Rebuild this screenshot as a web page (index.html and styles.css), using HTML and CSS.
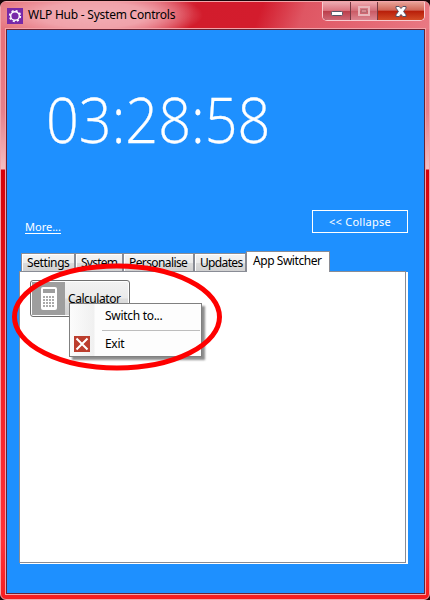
FILE: index.html
```
<!DOCTYPE html>
<html lang="en">
<head>
<meta charset="utf-8">
<title>WLP Hub - System Controls</title>
<link rel="stylesheet" href="styles.css">
</head>
<body>
<div class="window">
  <header class="titlebar">
    <svg class="app-icon" width="16" height="16" viewBox="0 0 16 16"><rect width="16" height="16" fill="#7729a8"/><circle cx="8" cy="8" r="5.4" fill="none" stroke="#fff" stroke-width="1.5" stroke-dasharray="2.1 2.14"/><circle cx="8" cy="8" r="4.3" fill="none" stroke="#fff" stroke-width="1.4"/></svg>
    <h1 class="title">WLP Hub - System Controls</h1>
    <div class="controls">
      <span class="control minimise"><svg width="14" height="7"><rect x="1.5" y="1.5" width="11" height="4" rx="1" fill="#fff" stroke="#555566"/></svg></span>
      <span class="control maximise"><svg width="12" height="10"><rect x="1" y="1" width="10" height="8" fill="none" stroke="#e9b6bb" stroke-width="2"/><rect x="3.5" y="3.5" width="5" height="3" fill="#d78790" stroke="#b66b73"/></svg></span>
      <span class="control close"><svg width="12" height="11" viewBox="0 0 12 11"><path d="M1 .5H4.2L6 2.500 7.800 .5H11V2.200L8.600 5.500 11 8.800V10.500H7.800L6 8.500 4.200 10.500H1V8.800L3.400 5.500 1 2.200Z" fill="#fff" stroke="#535164"/></svg></span>
    </div>
  </header>
  <main class="client">
    <div class="clock">03:28:58</div>
    <div class="actions"><a class="more">More...</a><button class="collapse">&lt;&lt; Collapse</button></div>
    <nav class="tabs">
      <span class="tab settings">Settings</span><span class="tab system">System</span><span class="tab personalise">Personalise</span><span class="tab updates">Updates</span><span class="tab active">App Switcher</span>
    </nav>
    <section class="panel">
      <button class="app-button">
        <svg width="33" height="33" viewBox="0 0 33 33"><rect width="33" height="33" fill="#9e9e9e"/><rect x="9" y="5" width="16" height="23" rx="2" fill="#fff"/><rect x="11" y="7" width="12" height="4" fill="#9e9e9e"/><path d="M11 14h2v2h-2zM14 14h2v2h-2zM17 14h2v2h-2zM20 14h2v2h-2zM11 17h2v2h-2zM14 17h2v2h-2zM17 17h2v2h-2zM20 17h2v2h-2zM11 20h2v2h-2zM14 20h2v2h-2zM17 20h2v2h-2zM20 20h2v2h-2zM11 23h2v2h-2zM14 23h2v2h-2zM17 23h2v2h-2zM20 23h2v2h-2z" fill="#aaa"/></svg>
        <span class="app-name">Calculator</span>
      </button>
    </section>
  </main>
</div>
<div class="menu">
  <div class="menu-item switch"><span>Switch to...</span></div>
  <div class="separator"></div>
  <div class="menu-item exit"><svg width="16" height="16"><rect width="16" height="16" fill="#bc3e2e"/><path d="M2.500 2.500L13.500 13.500M13.500 2.500L2.500 13.500" stroke="#fff" stroke-width="2"/></svg><span>Exit</span></div>
</div>
<svg class="highlight" width="214" height="112"><ellipse cx="107" cy="56" rx="102.500" ry="51" fill="none" stroke="#fe0000" stroke-width="5"/></svg>
</body>
</html>
```
FILE: styles.css
```
* { box-sizing: border-box; }
body { margin: 0; width: 430px; height: 600px; overflow: hidden; background: #190609; font: 12px/16px "Noto Sans", sans-serif; color: #000; }
button { font: inherit; padding: 0; margin: 0; }
svg { display: block; flex: none; }
.window { width: 430px; height: 599px; margin-top: 1px; padding: 0 4px 4px 5px; border: 1px solid #f3a5aa; border-radius: 6px; background: linear-gradient(#e6717c 0, #e6717c 45px, #e7808b 110px, #f4bec2 167px, #d5000b 168px, #d90b12 220px, #f02028 370px, #ff3038 540px, #f51c1e 100%); }
.titlebar { height: 27px; margin: 0 -4px 0 -5px; padding: 0 4px 0 6px; display: flex; align-items: flex-start; border-radius: 5px 5px 0 0; background: radial-gradient(ellipse 110px 26px at 92px 13px, #f2adb4 0, #f0a2aa 50%, rgba(240,155,165,0) 100%), linear-gradient(110deg, #e5737c 0, #de5362 35%, #d21c2c 45%, #d31c2d 60%, #df5663 70%, #e97983 100%); }
.app-icon { margin-top: 6px; }
.title { margin: 5px 0 0 5px; font-size: 12px; font-weight: 400; line-height: 16px; white-space: nowrap; letter-spacing: -.23px; }
.controls { margin-left: auto; height: 19px; width: 103px; display: flex; border: 1px solid #f8cbd0; border-top: 0; border-radius: 0 0 5px 5px; overflow: hidden; box-shadow: inset 0 0 0 1px #75313a; }
.control { display: flex; align-items: center; justify-content: center; border-right: 1px solid #783943; background: linear-gradient(#ecaab0 0, #dc7580 47%, #bb3d4a 50%, #ce6674 100%); }
.minimise { width: 28px; padding-top: 4px; }
.maximise { width: 27px; background: linear-gradient(#efa8ae, #d26c77 49%, #ca5964 50%, #dc8590); }
.close { flex: 1; border: 0; background: linear-gradient(#e8a297 0, #d06657 46%, #b81d09 50%, #d34b25 100%); }
.client { width: 419px; height: 565px; border: 1px solid #692233; outline: 1px solid #f3a2a8; background: #1e90ff; display: flex; flex-direction: column; }
.clock { height: 180px; padding: 46px 0 0 39px; color: #fff; font: 300 63px/86px "Open Sans", sans-serif; transform: scaleX(.913); transform-origin: 39px 0; white-space: nowrap; -webkit-text-stroke: .3px #fff; }
.actions { height: 41px; display: flex; justify-content: space-between; padding: 0 16px 0 18px; color: #fff; }
.more { margin-top: 9px; font-size: 11px; line-height: 16px; text-decoration: underline; text-underline-offset: 2px; }
.collapse { width: 96px; height: 23px; border: 1px solid #fff; background: none; color: #fff; font-size: 11px; letter-spacing: .25px; }
.tabs { height: 20px; padding-left: 14px; display: flex; align-items: flex-end; }
.tab { height: 18px; border: 1px solid #898c95; border-bottom: 0; padding: 1px 0 0 5px; background: linear-gradient(#f4f4f4 0, #ececec 50%, #dcdcdc 52%, #d1d1d1 100%); white-space: nowrap; box-shadow: inset 1px 1px #fff; line-height: 16px; }
.settings { width: 54px; letter-spacing: -.4px; }
.system { width: 48px; letter-spacing: -.75px; }
.personalise { width: 71px; letter-spacing: -.6px; }
.updates { width: 52px; letter-spacing: -.65px; padding-left: 5px; }
.active { width: 84px; height: 21px; padding: 1px 0 0 6px; background: #fff; position: relative; margin-bottom: -1px; letter-spacing: -.45px; }
.panel { width: 387px; height: 292px; margin-left: 12px; padding: 8px 10px; border: 1px solid #898c95; background: #fff; box-shadow: 1px 1px #fff, 2px 1px #fff; }
.app-button { width: 100px; height: 37px; display: flex; align-items: center; padding: 0 1px; border: 1px solid #707070; border-radius: 3px; background: linear-gradient(#f3f3f3 0, #ebebeb 49%, #dddddd 51%, #d0d0d0 100%); box-shadow: inset 0 0 0 1px #fff; }
.app-name { margin-left: 3px; letter-spacing: -.45px; color: #000; }
.menu { position: absolute; left: 69px; top: 303px; width: 133px; height: 54px; border: 1px solid #808080; background: linear-gradient(90deg, #fcfcfc 0, #f0f0f0 24px, #fdfdfd 25px); box-shadow: 3px 3px 2px rgba(0,0,0,.45); }
.menu-item { height: 24px; padding-left: 35px; line-height: 24px; letter-spacing: -.3px; }
.separator { height: 1px; margin: 2px 1px 1px 32px; background: #bdbdbd; }
.exit { display: flex; align-items: center; padding-left: 4px; }
.exit span { margin-left: 15px; }
.highlight { position: absolute; left: 10px; top: 261px; }
```
